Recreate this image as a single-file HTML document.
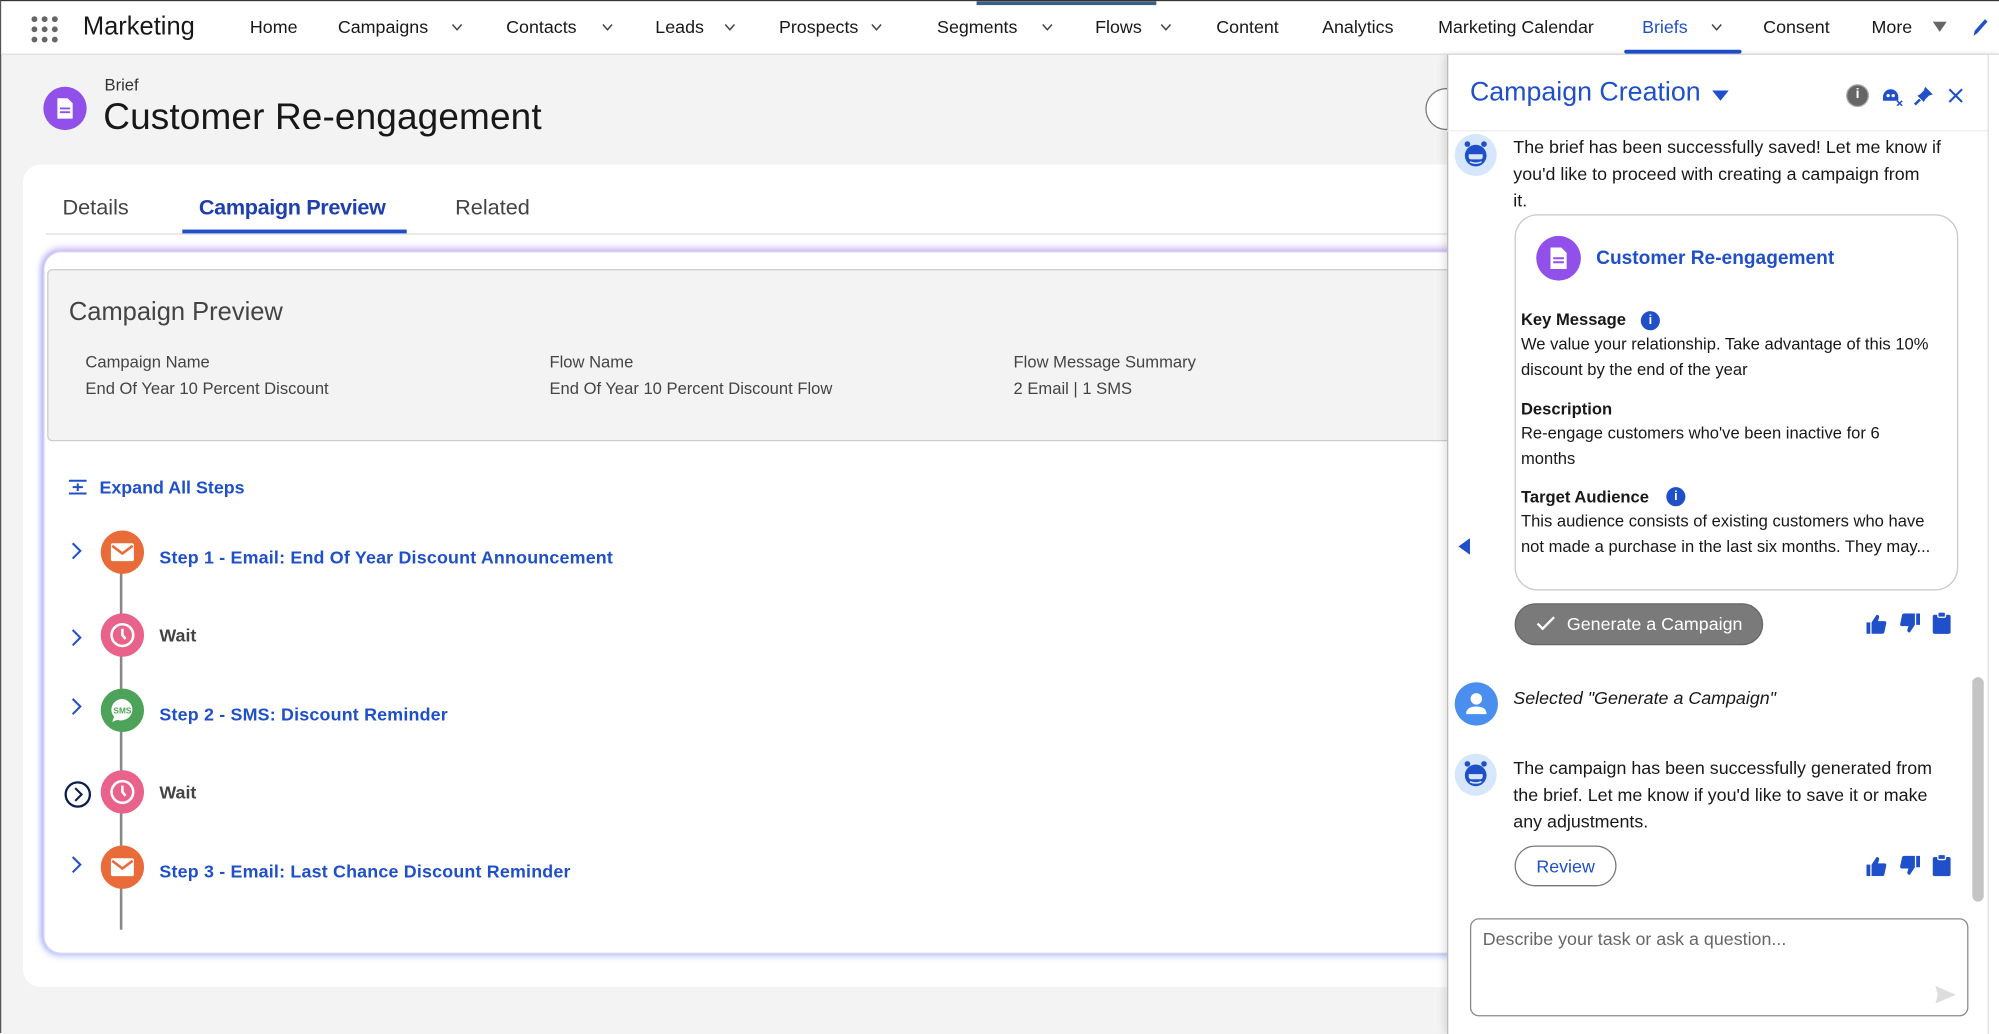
<!DOCTYPE html>
<html><head><meta charset="utf-8">
<style>
*{box-sizing:border-box;margin:0;padding:0}
html,body{width:1999px;height:1033px;overflow:hidden;background:#f3f3f3;font-family:"Liberation Sans",Arial,sans-serif}
#w{position:absolute;left:0;top:0;width:1568px;height:810px;transform:scale(1.2749,1.2753);transform-origin:0 0;background:#f3f3f3;border-left:1px solid #555;border-top:1px solid #333}
.a{position:absolute;white-space:nowrap}
.nav{position:absolute;left:0;top:0;width:1568px;height:42px;background:#fff;border-bottom:1px solid #ddd}
.ni{position:absolute;top:12px;font-size:14px;color:#181818}
.chev{position:absolute;top:15px;width:9px;height:9px}
.blue{color:#1f4fc9}
.tl{position:absolute;left:93px;width:2px;background:#888}
.circ{position:absolute;width:34px;height:34px;border-radius:50%;left:78px}
.st{position:absolute;left:124px;font-size:14px;font-weight:bold;color:#1f4fc9;letter-spacing:.15px}
.wt{position:absolute;left:124px;font-size:14px;font-weight:bold;color:#444}
.sc{position:absolute;left:54px;width:10px;height:14px}
.p{font-size:14px;color:#181818;line-height:21px}
.cl{font-size:13px;color:#181818;line-height:20px}
</style></head><body><div id="w">
<div class="nav">
 <svg class="a" style="left:22px;top:10px" width="24" height="24" viewBox="0 0 24 24" fill="#666"><circle cx="4" cy="4" r="2.3"/><circle cx="12" cy="4" r="2.3"/><circle cx="20" cy="4" r="2.3"/><circle cx="4" cy="12" r="2.3"/><circle cx="12" cy="12" r="2.3"/><circle cx="20" cy="12" r="2.3"/><circle cx="4" cy="20" r="2.3"/><circle cx="12" cy="20" r="2.3"/><circle cx="20" cy="20" r="2.3"/></svg>
 <div class="a" style="left:64px;top:9px;font-size:20px;color:#181818">Marketing</div>
 <div class="ni" style="left:195px">Home</div>
 <div class="ni" style="left:264px">Campaigns</div>
 <div class="ni" style="left:396px">Contacts</div>
 <div class="ni" style="left:513px">Leads</div>
 <div class="ni" style="left:610px">Prospects</div>
 <div class="ni" style="left:734px">Segments</div>
 <div class="ni" style="left:858px">Flows</div>
 <div class="ni" style="left:953px">Content</div>
 <div class="ni" style="left:1036px">Analytics</div>
 <div class="ni" style="left:1127px">Marketing Calendar</div>
 <div class="ni blue" style="left:1287px">Briefs</div>
 <div class="ni" style="left:1382px">Consent</div>
 <div class="ni" style="left:1467px">More</div>
 <svg class="a" style="left:1515px;top:16px" width="11" height="8"><path d="M0 0H11L5.5 8Z" fill="#666"/></svg>
 <svg class="a" style="left:1545px;top:13px" width="14" height="16" viewBox="0 0 14 16"><path d="M2 14L3 10L11 1L13 3L5 12Z" fill="#1f4fc9"/></svg>
 <div class="a" style="left:765px;top:0;width:141px;height:3px;background:#3b5f7e"></div>
 <div class="a" style="left:1273px;top:38px;width:92px;height:3px;background:#1f4fc9;border-radius:2px"></div>
</div>
<svg width="0" height="0" style="position:absolute"><defs><path id="cv" d="M1 2L5 6.5L9 2" fill="none" stroke="#444" stroke-width="1.3"/></defs></svg>
<svg class="chev" style="left:353px;top:16px" viewBox="0 0 10 9"><use href="#cv"/></svg>
<svg class="chev" style="left:471px;top:16px" viewBox="0 0 10 9"><use href="#cv"/></svg>
<svg class="chev" style="left:567px;top:16px" viewBox="0 0 10 9"><use href="#cv"/></svg>
<svg class="chev" style="left:682px;top:16px" viewBox="0 0 10 9"><use href="#cv"/></svg>
<svg class="chev" style="left:816px;top:16px" viewBox="0 0 10 9"><use href="#cv"/></svg>
<svg class="chev" style="left:909px;top:16px" viewBox="0 0 10 9"><use href="#cv"/></svg>
<svg class="chev" style="left:1341px;top:16px" viewBox="0 0 10 9"><use href="#cv"/></svg>

<div class="a" style="left:33px;top:67px;width:34px;height:34px;border-radius:50%;background:#9050e9"></div>
<svg class="a" style="left:41px;top:75px" width="18" height="18" viewBox="0 0 18 18"><path d="M3 1H11L15 5V17H3Z" fill="#fff"/><path d="M5 9H13M5 12H13" stroke="#9050e9" stroke-width="1.5"/></svg>
<div class="a" style="left:81px;top:58px;font-size:13px;color:#333">Brief</div>
<div class="a" style="left:80px;top:75px;font-size:29px;color:#181818;letter-spacing:.1px">Customer Re-engagement</div>
<div class="a" style="left:1117px;top:68px;width:40px;height:33px;border:1px solid #777;border-radius:17px;background:#fff"></div>

<div class="a" style="left:17px;top:128px;width:1200px;height:645px;background:#fff;border-radius:14px"></div>
<div class="a" style="left:48px;top:152px;font-size:17px;color:#444">Details</div>
<div class="a" style="left:155px;top:152px;font-size:17px;color:#1f3fae;font-weight:bold;letter-spacing:-.3px">Campaign Preview</div>
<div class="a" style="left:356px;top:152px;font-size:17px;color:#444">Related</div>
<div class="a" style="left:35px;top:182px;width:1150px;height:1px;background:#ddd"></div>
<div class="a" style="left:142px;top:179px;width:176px;height:3px;background:#1f4fc9"></div>

<div class="a" style="left:33px;top:196px;width:1180px;height:551px;border-radius:14px;background:#fff;box-shadow:0 -3px 6px rgba(170,120,230,.35),-2px 0 4px rgba(120,150,240,.4),0 2px 6px rgba(120,150,240,.35);border:1px solid #dcd6f5"></div>
<div class="a" style="left:36px;top:210px;width:1160px;height:135px;background:#f3f3f3;border:1px solid #ccc;border-radius:4px"></div>
<div class="a" style="left:53px;top:233px;font-size:20px;color:#444">Campaign Preview</div>
<div class="a" style="left:66px;top:275px;font-size:13px;color:#444">Campaign Name</div>
<div class="a" style="left:66px;top:296px;font-size:13px;color:#444">End Of Year 10 Percent Discount</div>
<div class="a" style="left:430px;top:275px;font-size:13px;color:#444">Flow Name</div>
<div class="a" style="left:430px;top:296px;font-size:13px;color:#444">End Of Year 10 Percent Discount Flow</div>
<div class="a" style="left:794px;top:275px;font-size:13px;color:#444">Flow Message Summary</div>
<div class="a" style="left:794px;top:296px;font-size:13px;color:#444">2 Email | 1 SMS</div>

<svg class="a" style="left:53px;top:375px" width="14" height="12" viewBox="0 0 14 12"><path d="M0 1H14M0 11H14M3 6H11M7 3V9" stroke="#1f4fc9" stroke-width="1.6"/></svg>
<div class="a" style="left:77px;top:373px;font-size:14px;font-weight:bold;color:#1f4fc9">Expand All Steps</div>

<div class="tl" style="top:432px;height:296px"></div>
<div class="circ" style="top:415px;background:#ea6b3a"></div>
<svg class="a" style="left:85px;top:424px" width="20" height="16" viewBox="0 0 20 16"><rect x="1" y="1" width="18" height="14" rx="1.5" fill="#fff"/><path d="M2 3L10 9L18 3" fill="none" stroke="#ea6b3a" stroke-width="2"/></svg>
<div class="circ" style="top:480px;background:#e9628b"></div>
<svg class="a" style="left:84px;top:486px" width="22" height="22" viewBox="0 0 22 22"><circle cx="11" cy="11" r="8.5" fill="none" stroke="#fff" stroke-width="2"/><path d="M11 6V11L13.5 14" fill="none" stroke="#fff" stroke-width="2"/></svg>
<div class="circ" style="top:539px;background:#4ea35a"></div>
<svg class="a" style="left:84px;top:545px" width="22" height="22" viewBox="0 0 22 22"><path d="M11 2A9 8.5 0 1 1 7 18.5L3 20L4.5 16A9 8.5 0 0 1 11 2Z" fill="#fff"/><text x="11" y="13.5" font-size="6.5" font-weight="bold" fill="#4ea35a" text-anchor="middle" font-family="Liberation Sans">SMS</text></svg>
<div class="circ" style="top:603px;background:#e9628b"></div>
<svg class="a" style="left:84px;top:609px" width="22" height="22" viewBox="0 0 22 22"><circle cx="11" cy="11" r="8.5" fill="none" stroke="#fff" stroke-width="2"/><path d="M11 6V11L13.5 14" fill="none" stroke="#fff" stroke-width="2"/></svg>
<div class="circ" style="top:662px;background:#ea6b3a"></div>
<svg class="a" style="left:85px;top:671px" width="20" height="16" viewBox="0 0 20 16"><rect x="1" y="1" width="18" height="14" rx="1.5" fill="#fff"/><path d="M2 3L10 9L18 3" fill="none" stroke="#ea6b3a" stroke-width="2"/></svg>

<svg class="sc" style="top:424px" viewBox="0 0 10 14"><path d="M2 1L8 7L2 13" fill="none" stroke="#1f4fc9" stroke-width="1.6"/></svg>
<svg class="sc" style="top:492px" viewBox="0 0 10 14"><path d="M2 1L8 7L2 13" fill="none" stroke="#1f4fc9" stroke-width="1.6"/></svg>
<svg class="sc" style="top:546px" viewBox="0 0 10 14"><path d="M2 1L8 7L2 13" fill="none" stroke="#1f4fc9" stroke-width="1.6"/></svg>
<svg class="a" style="left:49px;top:611px" width="22" height="22" viewBox="0 0 22 22"><circle cx="11" cy="11" r="9.5" fill="none" stroke="#0c1e4a" stroke-width="1.8"/><path d="M9 6L14 11L9 16" fill="none" stroke="#0c1e4a" stroke-width="1.6"/></svg>
<svg class="sc" style="top:670px" viewBox="0 0 10 14"><path d="M2 1L8 7L2 13" fill="none" stroke="#1f4fc9" stroke-width="1.6"/></svg>

<div class="st" style="top:428px">Step 1 - Email: End Of Year Discount Announcement</div>
<div class="wt" style="top:489px">Wait</div>
<div class="st" style="top:551px">Step 2 - SMS: Discount Reminder</div>
<div class="wt" style="top:612px">Wait</div>
<div class="st" style="top:674px">Step 3 - Email: Last Chance Discount Reminder</div>

<div class="a" style="left:1134px;top:42px;width:434px;height:768px;background:#fff;border-left:1px solid #bbb;box-shadow:-2px 0 6px rgba(0,0,0,.12)"></div>
<div class="a" style="left:1558px;top:42px;width:10px;height:768px;background:#fff;border-left:1px solid #ddd"></div>
<div class="a" style="left:1152px;top:60px;font-size:21px;color:#1f4fc9">Campaign Creation</div>
<svg class="a" style="left:1342px;top:70px" width="13" height="9"><path d="M0 0H13L6.5 8Z" fill="#1f4fc9"/></svg>
<div class="a" style="left:1447px;top:65px;width:18px;height:18px;border-radius:50%;background:#666;border:1.5px solid #aaa;color:#fff;font-size:11px;font-weight:bold;text-align:center;line-height:15px">i</div>
<svg class="a" style="left:1474px;top:66px" width="18" height="16" viewBox="0 0 18 16"><path d="M2 9A6 6 0 0 1 14 9V12H2Z" fill="#1f4fc9"/><circle cx="6" cy="8" r="1.3" fill="#fff"/><circle cx="10" cy="8" r="1.3" fill="#fff"/><path d="M13 12L17 16M17 12L13 16" stroke="#1f4fc9" stroke-width="1.2"/></svg>
<svg class="a" style="left:1500px;top:66px" width="16" height="16" viewBox="0 0 16 16"><path d="M9 1L15 7L12 8L9 11L8 13L3 8L5 7L8 4Z" fill="#1f4fc9"/><path d="M5 11L1 15" stroke="#1f4fc9" stroke-width="2"/></svg>
<svg class="a" style="left:1527px;top:68px" width="12" height="12"><path d="M1 1L11 11M11 1L1 11" stroke="#1f4fc9" stroke-width="1.6"/></svg>
<div class="a" style="left:1134px;top:101px;width:424px;height:1px;background:#eee"></div>

<div class="a" style="left:1140px;top:104px;width:33px;height:33px;border-radius:50%;background:#d6e7fb"></div>
<svg class="a" style="left:1145px;top:108px" width="23" height="23" viewBox="0 0 23 23"><circle cx="11.5" cy="13" r="8.5" fill="#1f4fc9"/><circle cx="5" cy="4" r="2.2" fill="#1f4fc9"/><circle cx="18" cy="4" r="2.2" fill="#1f4fc9"/><path d="M6 12H17V14Q17 16 15 16H8Q6 16 6 14Z" fill="#d6e7fb"/><path d="M7 18Q11.5 20 16 18" stroke="#d6e7fb" stroke-width="1.2" fill="none"/></svg>
<div class="a p" style="left:1186px;top:104px">The brief has been successfully saved! Let me know if<br>you'd like to proceed with creating a campaign from<br>it.</div>

<div class="a" style="left:1187px;top:167px;width:348px;height:295px;border:1px solid #c9c9c9;border-radius:18px"></div>
<div class="a" style="left:1204px;top:184px;width:35px;height:35px;border-radius:50%;background:#9050e9"></div>
<svg class="a" style="left:1212px;top:192px" width="19" height="19" viewBox="0 0 18 18"><path d="M3 1H11L15 5V17H3Z" fill="#fff"/><path d="M5 9H13M5 12H13" stroke="#9050e9" stroke-width="1.5"/></svg>
<div class="a" style="left:1251px;top:193px;font-size:15px;font-weight:bold;color:#1f4fc9">Customer Re-engagement</div>
<div class="a cl" style="left:1192px;top:240px;font-weight:bold">Key Message</div>
<div class="a" style="left:1286px;top:243px;width:15px;height:15px;border-radius:50%;background:#1f4fc9;color:#fff;font-size:10px;font-weight:bold;text-align:center;line-height:15px">i</div>
<div class="a cl" style="left:1192px;top:259px">We value your relationship. Take advantage of this 10%<br>discount by the end of the year</div>
<div class="a cl" style="left:1192px;top:310px;font-weight:bold">Description</div>
<div class="a cl" style="left:1192px;top:329px">Re-engage customers who've been inactive for 6<br>months</div>
<div class="a cl" style="left:1192px;top:379px;font-weight:bold">Target Audience</div>
<div class="a" style="left:1306px;top:381px;width:15px;height:15px;border-radius:50%;background:#1f4fc9;color:#fff;font-size:10px;font-weight:bold;text-align:center;line-height:15px">i</div>
<div class="a cl" style="left:1192px;top:398px">This audience consists of existing customers who have<br>not made a purchase in the last six months. They may...</div>
<svg class="a" style="left:1143px;top:421px" width="10" height="13"><path d="M9 0V13L0 6.5Z" fill="#1f4fc9"/></svg>

<div class="a" style="left:1187px;top:472px;width:195px;height:33px;border-radius:17px;background:#7a7a7a;border:1px solid #666"></div>
<svg class="a" style="left:1204px;top:481px" width="15" height="13"><path d="M1 7L5 11L14 2" fill="none" stroke="#fff" stroke-width="1.8"/></svg>
<div class="a" style="left:1228px;top:480px;font-size:14px;color:#fff">Generate a Campaign</div>

<svg width="0" height="0" style="position:absolute"><defs>
<g id="fb"><path d="M0 7H3V16H0Z" fill="#1f4fc9"/><path d="M4 7L8 1Q10 1 10 3L9 6H14Q16 6 15.5 8L14 15Q13.5 16 12 16H4Z" fill="#1f4fc9"/></g>
<g id="cb"><rect x="1" y="2" width="14" height="15" rx="1.5" fill="#1f4fc9"/><rect x="5" y="0" width="6" height="4" rx="1" fill="#1f4fc9" stroke="#fff" stroke-width="1"/></g>
</defs></svg>
<svg class="a" style="left:1463px;top:480px" width="16" height="16" viewBox="0 0 16 16"><use href="#fb"/></svg>
<svg class="a" style="left:1489px;top:480px" width="16" height="16" viewBox="0 0 16 16"><g transform="rotate(180 8 8)"><use href="#fb"/></g></svg>
<svg class="a" style="left:1514px;top:479px" width="16" height="18" viewBox="0 0 16 18"><use href="#cb"/></svg>

<div class="a" style="left:1140px;top:534px;width:34px;height:34px;border-radius:50%;background:#4a8ff0"></div>
<svg class="a" style="left:1147px;top:540px" width="20" height="22" viewBox="0 0 20 22"><circle cx="10" cy="7" r="4.5" fill="#fff"/><path d="M2 19Q2 13 10 13Q18 13 18 19Z" fill="#fff"/></svg>
<div class="a p" style="left:1186px;top:536px;font-style:italic">Selected "Generate a Campaign"</div>

<div class="a" style="left:1140px;top:590px;width:33px;height:33px;border-radius:50%;background:#d6e7fb"></div>
<svg class="a" style="left:1145px;top:594px" width="23" height="23" viewBox="0 0 23 23"><circle cx="11.5" cy="13" r="8.5" fill="#1f4fc9"/><circle cx="5" cy="4" r="2.2" fill="#1f4fc9"/><circle cx="18" cy="4" r="2.2" fill="#1f4fc9"/><path d="M6 12H17V14Q17 16 15 16H8Q6 16 6 14Z" fill="#d6e7fb"/><path d="M7 18Q11.5 20 16 18" stroke="#d6e7fb" stroke-width="1.2" fill="none"/></svg>
<div class="a p" style="left:1186px;top:591px">The campaign has been successfully generated from<br>the brief. Let me know if you'd like to save it or make<br>any adjustments.</div>

<div class="a" style="left:1187px;top:662px;width:80px;height:32px;border-radius:16px;border:1px solid #777;background:#fff;color:#1f4fc9;font-size:14px;text-align:center;line-height:30px">Review</div>
<svg class="a" style="left:1463px;top:670px" width="16" height="16" viewBox="0 0 16 16"><use href="#fb"/></svg>
<svg class="a" style="left:1489px;top:670px" width="16" height="16" viewBox="0 0 16 16"><g transform="rotate(180 8 8)"><use href="#fb"/></g></svg>
<svg class="a" style="left:1514px;top:669px" width="16" height="18" viewBox="0 0 16 18"><use href="#cb"/></svg>

<div class="a" style="left:1546px;top:530px;width:9px;height:176px;border-radius:5px;background:#c4c4c4"></div>

<div class="a" style="left:1152px;top:719px;width:391px;height:77px;border:1px solid #888;border-radius:7px;background:#fff"></div>
<div class="a" style="left:1162px;top:727px;font-size:14px;color:#666">Describe your task or ask a question...</div>
<svg class="a" style="left:1517px;top:772px" width="16" height="14" viewBox="0 0 16 14"><path d="M0 0L16 7L0 14L2 7Z" fill="#ddd"/></svg>
</div></body></html>
